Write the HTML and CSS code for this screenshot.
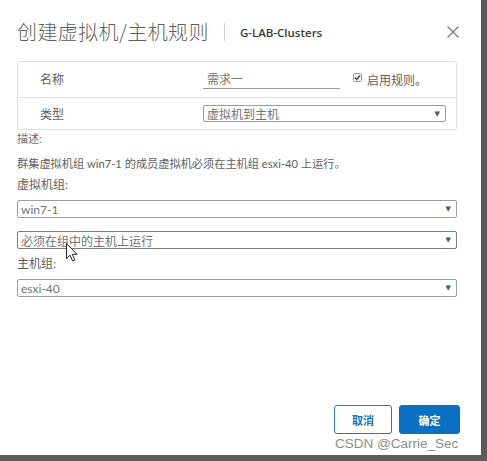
FILE: index.html
```html
<!DOCTYPE html>
<html lang="zh">
<head>
<meta charset="utf-8">
<title>创建虚拟机/主机规则</title>
<link rel="stylesheet" href="styles.css">
</head>
<body>
<div class="dialog">
  <div class="header">
    <h1 class="title">创建虚拟机/主机规则</h1>
    <span class="sep"></span>
    <span class="cluster">G-LAB-Clusters</span>
    <svg class="close" width="12" height="12" viewBox="0 0 12 12"><path d="M0.5 0.5 L11.5 11.5 M11.5 0.5 L0.5 11.5" stroke="#7a7a7a" stroke-width="1.3" fill="none"/></svg>
  </div>

  <div class="table">
    <div class="row row-name">
      <div class="label">名称</div>
      <div class="value">
        <div class="input">需求一</div>
        <span class="check"><svg width="9" height="9" viewBox="0 0 9 9"><rect x="0.5" y="0.5" width="8" height="8" rx="1" fill="#f4f4f4" stroke="#9a9a9a"/><path d="M2 4.6 L3.8 6.4 L7 2.4" stroke="#444" stroke-width="1.4" fill="none"/></svg></span>
        <span class="check-label">启用规则。</span>
      </div>
    </div>
    <div class="row row-type">
      <div class="label">类型</div>
      <div class="value">
        <div class="select select-type"><span>虚拟机到主机</span><span class="arrow">▼</span></div>
      </div>
    </div>
  </div>

  <div class="desc-label">描述:</div>
  <div class="desc">群集虚拟机组 win7-1 的成员虚拟机必须在主机组 esxi-40 上运行。</div>
  <div class="field-label vm-label">虚拟机组:</div>
  <div class="select full s1"><span>win7-1</span><span class="arrow">▼</span></div>
  <div class="select full s2 focus"><span>必须在组中的主机上运行</span><span class="arrow">▼</span></div>
  <div class="field-label host-label">主机组:</div>
  <div class="select full s3"><span>esxi-40</span><span class="arrow">▼</span></div>

  <div class="footer">
    <button class="btn btn-outline">取消</button>
    <button class="btn btn-primary">确定</button>
  </div>

  <svg class="cursor" width="12" height="19" viewBox="0 0 12 19"><path d="M0.5 0.5 L0.5 15.5 L4 12.2 L6.6 18 L8.8 17 L6.3 11.3 L11 11.3 Z" fill="#fff" stroke="#222" stroke-width="1" stroke-linejoin="round"/></svg>
  <div class="watermark">CSDN @Carrie_Sec</div>
</div>
</body>
</html>
```

FILE: styles.css
```css
* { box-sizing: border-box; }
html, body { margin: 0; padding: 0; }
body {
  background: #5b5b5b;
  width: 487px;
  height: 461px;
  overflow: hidden;
  font-family: "Lato", "Noto Sans CJK SC", sans-serif;
  color: #5e5e5e;
}
.dialog {
  position: relative;
  width: 481px;
  height: 455px;
  background: #fff;
  padding: 20px 24px 0 17px;
  display: flex;
  flex-direction: column;
}
.header {
  height: 24px;
  display: flex;
  align-items: center;
}
.title {
  margin: 0;
  font-family: "Noto Sans CJK SC", sans-serif;
  font-weight: 300;
  font-size: 20px;
  line-height: 24px;
  color: #5f5f5f;
  letter-spacing: 0.4px;
}
.sep {
  width: 1px;
  height: 18px;
  background: #d2d2d2;
  margin-left: 15px;
}
.cluster {
  margin-left: 15px;
  font-family: "Open Sans", "Lato", sans-serif;
  font-size: 11.5px;
  font-weight: 600;
  color: #3a3a3a;
}
.close {
  margin-left: auto;
  margin-right: -2px;
}
.table {
  margin-top: 17px;
  border: 1px solid #e2e2e2;
  border-radius: 2px;
}
.row {
  display: grid;
  grid-template-columns: 185px 1fr;
  font-size: 12px;
}
.row-name {
  height: 36px;
  border-bottom: 1px solid #e2e2e2;
}
.row-type {
  height: 31px;
}
.label {
  padding-left: 22px;
  display: flex;
  align-items: center;
  color: #5e5e5e;
  font-family: "Noto Sans CJK SC", sans-serif;
}
.row-name .label { padding-bottom: 2px; }
.value {
  display: flex;
  align-items: center;
}
.input {
  width: 137px;
  height: 19px;
  border-bottom: 1px solid #9a9a9a;
  padding-left: 4px;
  line-height: 18px;
  color: #7a7a7a;
  font-family: "Noto Sans CJK SC", sans-serif;
  align-self: flex-start;
  margin-top: 8px;
}
.check {
  margin-left: 13px;
  display: flex;
  margin-top: -4px;
}
.check-label {
  margin-left: 5px;
  margin-top: -1px;
  color: #5e5e5e;
  font-family: "Noto Sans CJK SC", sans-serif;
}
.select {
  height: 17px;
  border: 1px solid #9d9d9d;
  border-radius: 2px;
  display: flex;
  align-items: center;
  justify-content: space-between;
  padding: 0 5px 0 3px;
  font-size: 12px;
  color: #727272;
}
.select-type {
  width: 243px;
}
.arrow {
  font-size: 7px;
  color: #555;
  font-family: "DejaVu Sans", sans-serif;
}
.full {
  height: 18px;
  width: 440px;
}
.focus { border-color: #7d7d7d; }
.desc-label {
  margin-top: 1px;
  font-size: 11px;
  line-height: 16px;
  color: #6a6a6a;
}
.desc {
  margin-top: 9px;
  font-size: 11.2px;
  line-height: 16px;
  color: #5e5e5e;
}
.field-label {
  font-size: 12px;
  line-height: 16px;
  color: #5e5e5e;
}
.vm-label { margin-top: 5px; }
.s1 { margin-top: 7px; }
.s2 { margin-top: 13px; }
.host-label { margin-top: 7px; }
.s3 { margin-top: 7px; }
.footer {
  margin-top: auto;
  margin-right: -3px;
  padding-bottom: 21px;
  display: flex;
  justify-content: flex-end;
  gap: 7px;
}
.btn {
  height: 29px;
  border-radius: 3px;
  font-family: "Noto Sans CJK SC", sans-serif;
  font-size: 11px;
  font-weight: 700;
  padding: 0;
}
.btn-outline {
  width: 58px;
  background: #fff;
  border: 1px solid #2a78b8;
  color: #1d6fb5;
}
.btn-primary {
  width: 61px;
  background: #0b6fc2;
  border: 1px solid #0b6fc2;
  color: #fff;
}
.cursor {
  position: absolute;
  left: 66px;
  top: 243px;
}
.watermark {
  position: absolute;
  left: 335px;
  top: 436px;
  font-family: "Liberation Sans", Arial, sans-serif;
  font-size: 13.5px;
  color: #8c8c8c;
}
```
